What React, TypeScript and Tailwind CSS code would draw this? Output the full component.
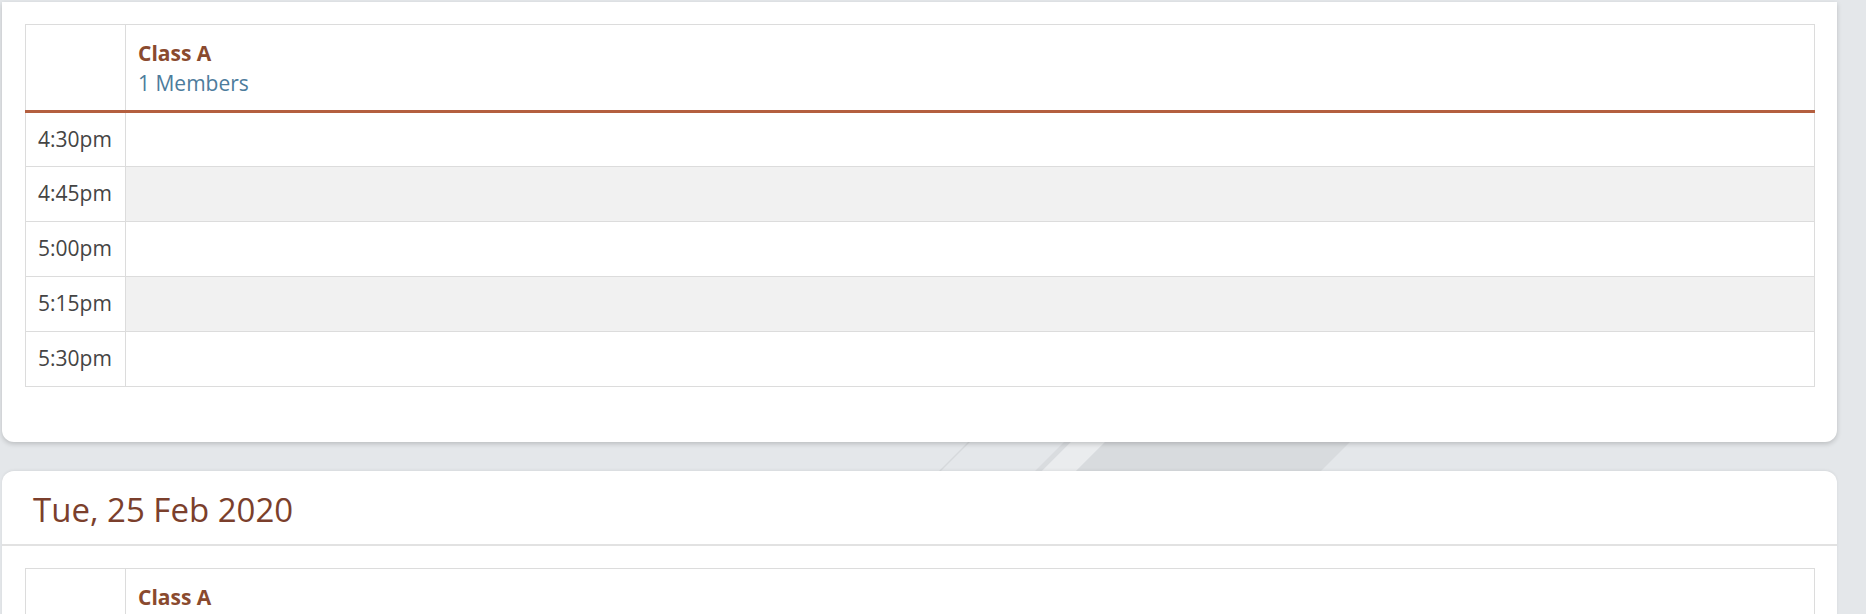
import React from "react";

const times = ["4:30pm", "4:45pm", "5:00pm", "5:15pm", "5:30pm"];

function ClassTable({ rows }: { rows: string[] }) {
  return (
    <table className="w-full border-collapse border border-[#dcdcdc]">
      <thead>
        <tr className="border-b-[3px] border-[#b45f3f]">
          <th className="w-[100px] border-r border-[#dcdcdc]" />
          <th className="px-[12px] pt-[13px] pb-[12px] text-left align-top font-normal leading-[30px]">
            <div className="text-[21px] font-bold text-[#8a4a2e]">Class A</div>
            <div className="text-[21px] text-[#4d7c9c]">1 Members</div>
          </th>
        </tr>
      </thead>
      <tbody>
        {rows.map((t, i) => (
          <tr key={t} className="h-[55px] border-b border-[#dcdcdc]">
            <td className="border-r border-[#dcdcdc] pl-[12px] text-[21px] text-[#444]">{t}</td>
            <td className={i % 2 === 1 ? "bg-[#f1f1f1]" : "bg-white"} />
          </tr>
        ))}
      </tbody>
    </table>
  );
}

export default function App() {
  return (
    <div
      className="relative h-[614px] w-[1866px] overflow-hidden bg-[#e4e7ea]"
      style={{ fontFamily: '"Open Sans", "Noto Sans", sans-serif' }}
    >
      {/* background stripes */}
      <svg className="absolute left-0 top-0" width="1866" height="614" viewBox="0 0 1866 614">
        <polygon points="990,420 992,420 922,490 920,490" fill="#d6d9dc" />
        <polygon points="1086,420 1093,420 1023,490 1016,490" fill="#d9dcdf" />
        <polygon points="1093,420 1127,420 1057,490 1023,490" fill="#eaecee" />
        <polygon points="1127,420 1372,420 1302,490 1057,490" fill="#d8dbde" />
      </svg>

      <div className="relative flex flex-col gap-[29px] pl-[2px] pr-[29px] pt-[2px]">
        <div className="rounded-b-[12px] bg-white pb-[55px] pl-[23px] pr-[22px] pt-[22px] shadow-[0_2px_5px_rgba(0,0,0,0.18)]">
          <ClassTable rows={times} />
        </div>

        <div className="rounded-t-[12px] bg-white shadow-[0_-1px_3px_rgba(0,0,0,0.06)]">
          <div className="flex h-[75px] items-center border-b-2 border-[#e2e2e2] pl-[31px] pt-[4px]">
            <h2 className="text-[33px] font-normal text-[#7b3f2c]">Tue, 25 Feb 2020</h2>
          </div>
          <div className="pl-[23px] pr-[22px] pt-[22px]">
            <ClassTable rows={times} />
          </div>
        </div>
      </div>
    </div>
  );
}
